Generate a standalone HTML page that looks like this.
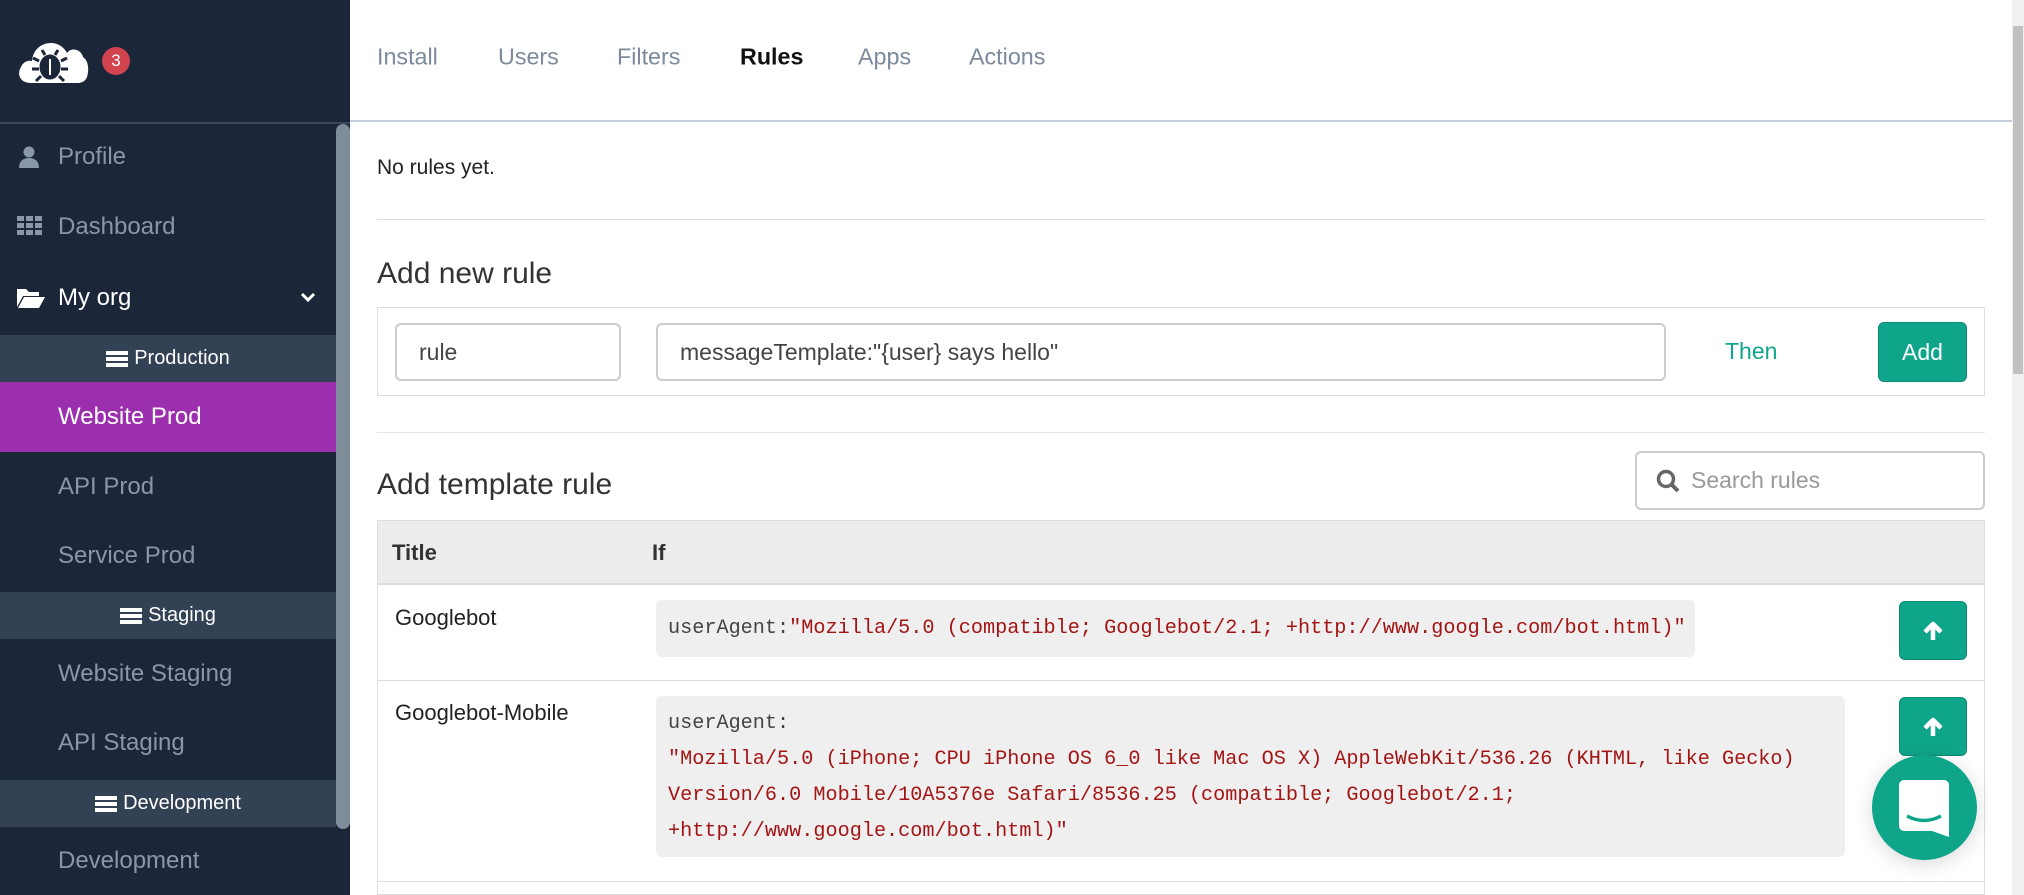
<!DOCTYPE html>
<html><head><meta charset="utf-8"><style>
*{box-sizing:border-box;margin:0;padding:0}
body{width:2024px;height:895px;overflow:hidden;background:#fff;font-family:"Liberation Sans",Roboto,sans-serif;position:relative;color:#222}
.a{position:absolute}
#sb{left:0;top:0;width:350px;height:895px;background:#1b2639}
.nav{position:absolute;left:58px;font-size:24px;color:#8a97a8;transform:translateY(-50%)}
.band{position:absolute;left:0;width:336px;height:47px;background:#334155;color:#fff;font-size:20px;display:flex;align-items:center;justify-content:center;gap:6px}
.tab{position:absolute;top:57px;transform:translateY(-50%);font-size:23.3px;color:#7c8a9c}
.inp{position:absolute;border:2px solid #ccc;border-radius:6px;background:#fff;font-size:23px;color:#444;display:flex;align-items:center;padding-left:22px}
.btn{position:absolute;background:#0fa58b;border:1px solid #0c8a74;border-radius:6px;color:#fff;display:flex;align-items:center;justify-content:center}
.code{position:absolute;background:#efefef;border-radius:6px;font-family:"Liberation Mono",monospace;font-size:20.2px;color:#444;padding:0 12px;line-height:36px;white-space:nowrap}
.code s{text-decoration:none;color:#a31515}
</style></head><body>
<div id="sb" class="a">
  <svg class="a" style="left:17px;top:33px" width="72" height="52" viewBox="0 0 72 52"><path d="M14 50 C2 50 0 40 4 34 C6 29 11 27 15 28 C16 16 25 10 34 10 C41 10 47 14 50 20 C54 14 64 16 66 24 C72 28 72 38 70 44 C68 49 64 50 60 50 Z" fill="#fff"/><g stroke="#1b2639" stroke-width="3" fill="none"><ellipse cx="33" cy="34" rx="9" ry="11" fill="#1b2639"/><path d="M22 28l-6-3M22 36h-7M24 43l-5 5M44 28l6-3M44 36h7M42 43l5 5M28 22l-3-5M38 22l3-5"/></g><path d="M33 26v16" stroke="#fff" stroke-width="2"/></svg>
  <div class="a" style="left:102px;top:47px;width:28px;height:28px;border-radius:50%;background:#d0434f;color:#fff;font-size:17px;display:flex;align-items:center;justify-content:center">3</div>
  <div class="a" style="left:0;top:122px;width:350px;height:2px;background:#3a475a"></div>
  <div class="a" style="left:336px;top:124px;width:14px;height:705px;background:#7f8c9a;border-radius:7px"></div>
  <svg class="a" style="left:18px;top:146px" width="22" height="22" viewBox="0 0 22 22"><circle cx="11" cy="6" r="5.5" fill="#8a97a8"/><path d="M1 22c0-7 4-10 10-10s10 3 10 10z" fill="#8a97a8"/></svg>
  <div class="nav" style="top:157px">Profile</div>
  <svg class="a" style="left:17px;top:216px" width="26" height="20" viewBox="0 0 26 20"><g fill="#8a97a8"><rect x="0" y="0" width="7" height="5"/><rect x="9" y="0" width="7" height="5"/><rect x="18" y="0" width="7" height="5"/><rect x="0" y="7" width="7" height="5"/><rect x="9" y="7" width="7" height="5"/><rect x="18" y="7" width="7" height="5"/><rect x="0" y="14" width="7" height="5"/><rect x="9" y="14" width="7" height="5"/><rect x="18" y="14" width="7" height="5"/></g></svg>
  <div class="nav" style="top:227px">Dashboard</div>
  <svg class="a" style="left:17px;top:287px" width="28" height="22" viewBox="0 0 28 22"><path d="M0 2h9l3 3h10v4H6L0 20z M7 10h21l-6 11H1z" fill="#fff"/></svg>
  <div class="nav" style="top:298px;color:#fff">My org</div>
  <svg class="a" style="left:300px;top:291px" width="16" height="12" viewBox="0 0 16 12"><path d="M2 3l6 6 6-6" stroke="#fff" stroke-width="3" fill="none"/></svg>
  <div class="band" style="top:335px"><span style="display:inline-block;width:22px;height:16px;background:repeating-linear-gradient(#fff 0 4px,#334155 4px 6px)"></span>Production</div>
  <div class="a" style="left:0;top:382px;width:336px;height:70px;background:#9c2fae"></div>
  <div class="nav" style="top:417px;color:#fff">Website Prod</div>
  <div class="nav" style="top:487px">API Prod</div>
  <div class="nav" style="top:556px">Service Prod</div>
  <div class="band" style="top:592px"><span style="display:inline-block;width:22px;height:16px;background:repeating-linear-gradient(#fff 0 4px,#334155 4px 6px)"></span>Staging</div>
  <div class="nav" style="top:674px">Website Staging</div>
  <div class="nav" style="top:743px">API Staging</div>
  <div class="band" style="top:780px"><span style="display:inline-block;width:22px;height:16px;background:repeating-linear-gradient(#fff 0 4px,#334155 4px 6px)"></span>Development</div>
  <div class="nav" style="top:861px">Development</div>
</div>
<div class="tab" style="left:377px">Install</div>
<div class="tab" style="left:498px">Users</div>
<div class="tab" style="left:617px">Filters</div>
<div class="tab" style="left:740px;color:#111;font-weight:bold">Rules</div>
<div class="tab" style="left:858px">Apps</div>
<div class="tab" style="left:969px">Actions</div>
<div class="a" style="left:350px;top:120px;width:1662px;height:2px;background:#c6ccd8"></div>
<div class="a" style="left:2012px;top:0;width:12px;height:895px;background:#f1f1f1"></div>
<div class="a" style="left:2013px;top:26px;width:10px;height:348px;background:#c1c1c1"></div>
<div class="a" style="left:377px;top:156px;font-size:21px">No rules yet.</div>
<div class="a" style="left:377px;top:219px;width:1608px;height:1px;background:#ddd"></div>
<div class="a" style="left:377px;top:257px;font-size:30px;color:#333">Add new rule</div>
<div class="a" style="left:377px;top:307px;width:1608px;height:89px;border:1px solid #ddd"></div>
<div class="inp" style="left:395px;top:323px;width:226px;height:58px">rule</div>
<div class="inp" style="left:656px;top:323px;width:1010px;height:58px">messageTemplate:"{user} says hello"</div>
<div class="a" style="left:1725px;top:338px;font-size:23px;color:#0fa58b">Then</div>
<div class="btn" style="left:1878px;top:322px;width:89px;height:60px;font-size:23px">Add</div>
<div class="a" style="left:377px;top:432px;width:1608px;height:1px;background:#e6e6e6"></div>
<div class="a" style="left:377px;top:468px;font-size:30px;color:#333">Add template rule</div>
<div class="inp" style="left:1635px;top:451px;width:350px;height:59px;color:#999;padding-left:18px"><svg width="26" height="26" viewBox="0 0 26 26" style="margin-right:10px"><circle cx="11" cy="11" r="7.5" stroke="#666" stroke-width="3.5" fill="none"/><path d="M16 16l7 7" stroke="#666" stroke-width="4"/></svg>Search rules</div>
<div class="a" style="left:377px;top:520px;width:1608px;height:375px;border:1px solid #ddd"></div>
<div class="a" style="left:377px;top:520px;width:1608px;height:65px;background:#ededed;border:1px solid #ddd;border-bottom:2px solid #ddd"></div>
<div class="a" style="left:392px;top:540px;font-size:22px;font-weight:bold;color:#333">Title</div>
<div class="a" style="left:652px;top:540px;font-size:22px;font-weight:bold;color:#333">If</div>
<div class="a" style="left:395px;top:605px;font-size:22px">Googlebot</div>
<div class="code" style="left:656px;top:600px;width:1039px;height:57px;line-height:57px">userAgent:<s>"Mozilla/5.0 (compatible; Googlebot/2.1; +http://www.google.com/bot.html)"</s></div>
<div class="btn" style="left:1899px;top:601px;width:68px;height:59px"><svg width="22" height="22" viewBox="0 0 22 22"><path d="M11 20V5M3 12l8-8 8 8" stroke="#fff" stroke-width="4.5" fill="none" stroke-linejoin="round"/></svg></div>
<div class="a" style="left:377px;top:680px;width:1608px;height:1px;background:#ddd"></div>
<div class="a" style="left:395px;top:700px;font-size:22px">Googlebot-Mobile</div>
<div class="code" style="left:656px;top:696px;width:1189px;height:161px;padding-top:10px">userAgent:<br><s>"Mozilla/5.0 (iPhone; CPU iPhone OS 6_0 like Mac OS X) AppleWebKit/536.26 (KHTML, like Gecko)<br>Version/6.0 Mobile/10A5376e Safari/8536.25 (compatible; Googlebot/2.1;<br>+http://www.google.com/bot.html)"</s></div>
<div class="btn" style="left:1899px;top:697px;width:68px;height:59px"><svg width="22" height="22" viewBox="0 0 22 22"><path d="M11 20V5M3 12l8-8 8 8" stroke="#fff" stroke-width="4.5" fill="none" stroke-linejoin="round"/></svg></div>
<div class="a" style="left:377px;top:881px;width:1608px;height:1px;background:#ddd"></div>
<div class="a" style="left:1872px;top:755px;width:105px;height:105px;border-radius:50%;background:#0fa58b;box-shadow:0 4px 20px rgba(0,0,0,.15)"></div>
<svg class="a" style="left:1899px;top:780px" width="50" height="57" viewBox="0 0 50 57"><path d="M5 0h40a5 5 0 0 1 5 5v52l-17-6H5a5 5 0 0 1-5-5V5a5 5 0 0 1 5-5z" fill="#fff"/><path d="M8 36q17 9 34 0" stroke="#0fa58b" stroke-width="3.5" fill="none"/></svg>
</body></html>
